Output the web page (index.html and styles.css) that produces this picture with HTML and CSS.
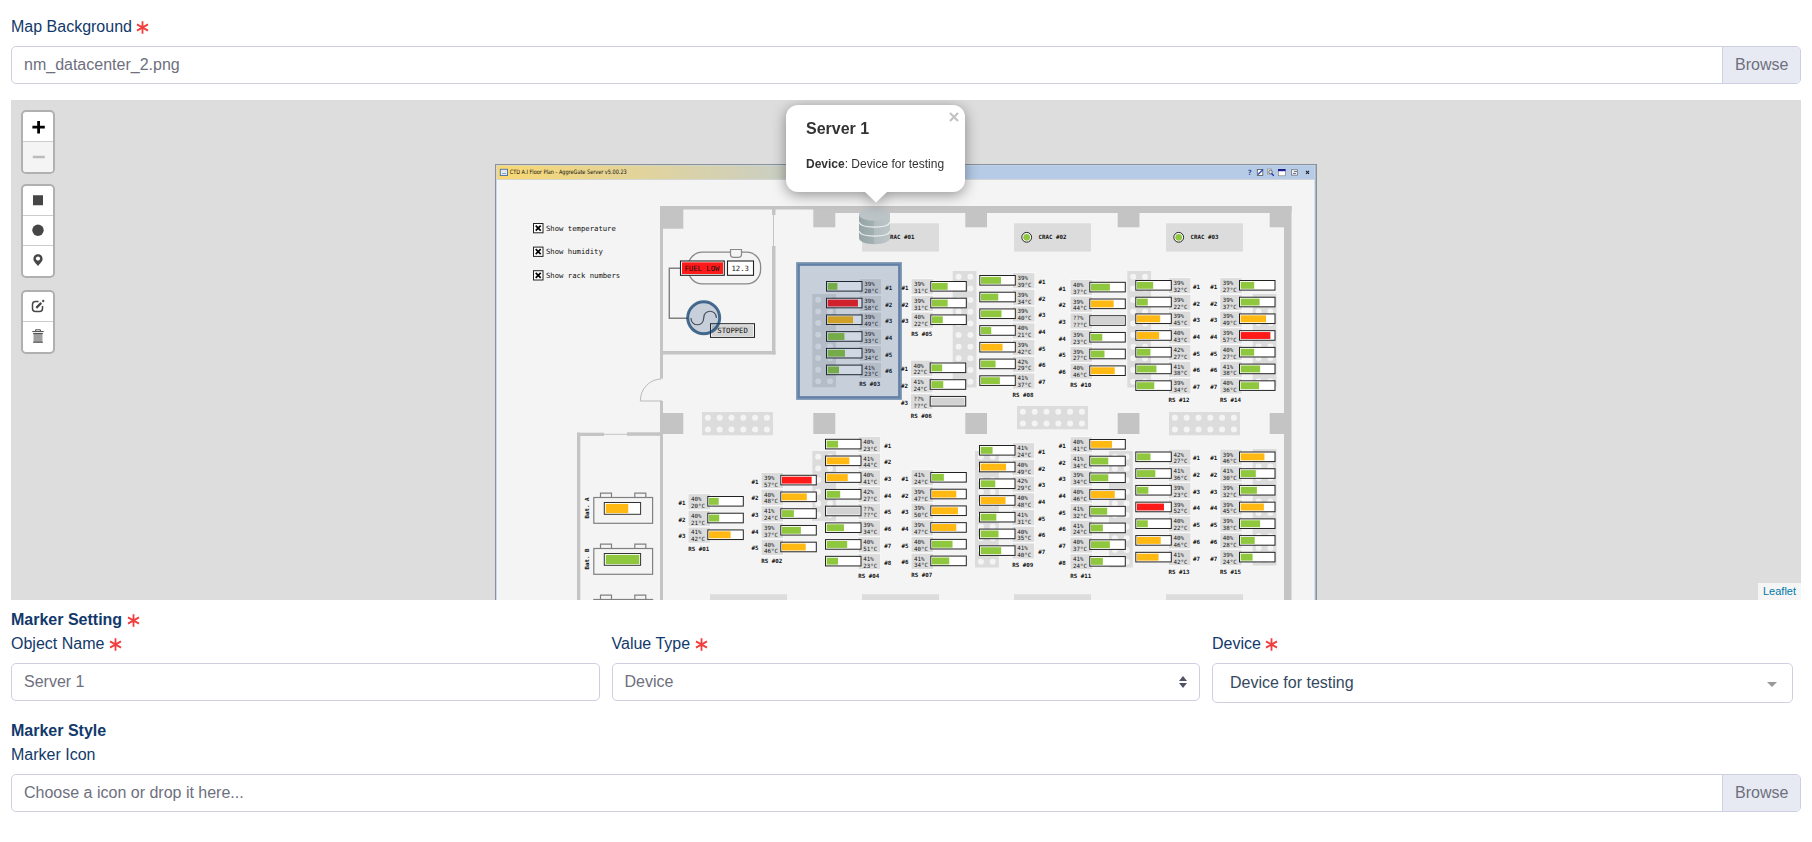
FILE: index.html
```html
<!DOCTYPE html>
<html lang="en">
<head>
<meta charset="utf-8">
<title>Map settings</title>
<link rel="stylesheet" href="styles.css">
</head>
<body>
<svg width="0" height="0" class="defs">
  <symbol id="star" viewBox="0 0 13 13"><path d="M6.5 .3v12.4M1 3.4l11 6.2M12 3.4L1 9.6" stroke="#f23d3d" stroke-width="1.8" fill="none"/></symbol>
</svg>
<form class="form">
  <label class="label">Map Background <svg class="req"><use href="#star"/></svg></label>
  <div class="file"><span class="file-name">nm_datacenter_2.png</span><span class="file-btn">Browse</span></div>

  <div class="map">
    <svg class="plan" id="plan" width="822" height="500" viewBox="495 100 822 500"></svg>
    <div class="controls">
      <div class="bar">
        <span class="tool"><svg width="30" height="29" viewBox="0 0 30 29"><path d="M9.4 15.2h12.400M15.6 9v12.400" stroke="#000" stroke-width="2.800"/></svg></span>
        <span class="tool off"><svg width="30" height="30" viewBox="0 0 30 30"><path d="M9.8 15h12" stroke="#bbb" stroke-width="2.6"/></svg></span>
      </div>
      <div class="bar shapes">
        <span class="tool"><svg width="30" height="29" viewBox="0 0 30 29"><path d="M10 9.3h10v10H10z" fill="#464646"/></svg></span>
        <span class="tool"><svg width="30" height="29" viewBox="0 0 30 29"><circle cx="15" cy="14.300" r="5.7" fill="#464646"/></svg></span>
        <span class="tool"><svg width="30" height="30" viewBox="0 0 30 30"><path d="M15 8.3c-2.8 0-4.6 2-4.6 4.5 0 3 2.4 4.2 4.6 7.2 2.2-3 4.6-4.2 4.6-7.2 0-2.500-1.800-4.500-4.600-4.500z" fill="#464646"/><circle cx="15" cy="12.600" r="2.100" fill="#fff"/></svg></span>
      </div>
      <div class="bar">
        <span class="tool"><svg width="30" height="29" viewBox="0 0 30 29" fill="none" stroke="#464646"><path d="M15.600 9.500h-3.100q-3 0-3 3v4q0 3 3 3h4q3 0 3-3v-2.500" stroke-width="1.500"/><path d="M13.300 15.900l5-5" stroke-width="2.200"/><path d="M19.400 9.700l1.500-1.500" stroke-width="2"/></svg></span>
        <span class="tool"><svg width="30" height="30" viewBox="0 0 30 30"><path d="M10.500 11.500h9v9h-9z" fill="#a0a0a0"/><path d="M9.300 9.600h11.400M12.600 9V7.800h4.800V9M10.200 11.600h9.600M10.200 20.200h9.600" stroke="#464646" fill="none"/></svg></span>
      </div>
    </div>
    <div class="popup">
      <div class="popup-body">
        <svg class="close" width="10" height="10" viewBox="0 0 10 10"><path d="M1 1l8 8M9 1L1 9" stroke="#c3c3c3" stroke-width="2.200"/></svg>
        <h3>Server 1</h3>
        <p><b>Device</b>: Device for testing</p>
      </div>
      <svg class="tip" width="22" height="11" viewBox="0 0 22 11"><path d="M0 0h22L11 10.600z" fill="#fff"/></svg>
    </div>
    <a class="credit">Leaflet</a>
  </div>

  <div class="heading first">Marker Setting <svg class="req"><use href="#star"/></svg></div>
  <div class="row">
    <div class="col"><label class="label">Object Name <svg class="req"><use href="#star"/></svg></label><div class="input">Server 1</div></div>
    <div class="col"><label class="label">Value Type <svg class="req"><use href="#star"/></svg></label><div class="input select">Device<svg width="8" height="12" viewBox="0 0 8 12"><path d="M0 5l4-5 4 5zM0 7l4 5 4-5z" fill="#505366"/></svg></div></div>
    <div class="col last"><label class="label">Device <svg class="req"><use href="#star"/></svg></label><div class="input picker">Device for testing<svg width="10" height="5" viewBox="0 0 10 5"><path d="M0 0h10L5 5z" fill="#999"/></svg></div></div>
  </div>
  <div class="heading second">Marker Style</div>
  <label class="label">Marker Icon</label>
  <div class="file"><span class="file-name">Choose a icon or drop it here...</span><span class="file-btn">Browse</span></div>
</form>
<script src="plan.js"></script>
</body>
</html>
```
FILE: styles.css
```css
* { box-sizing: border-box; }
body { margin: 0; background: #fff; font: 16px/24px "Liberation Sans", Arial, sans-serif; color: #12396b; }
.defs { display: block; height: 0; }
.form { padding: 15px 11px 0; }
.label { display: block; height: 24px; margin-bottom: 7px; }
.req { width: 13px; height: 13px; vertical-align: -2px; margin-left: 0; }
.file, .input { height: 38px; border: 1px solid #cfcfe2; border-radius: 5px; color: #6e707e; line-height: 36px; }
.file { display: flex; overflow: hidden; }
.file-name { flex: 1; padding-left: 12px; }
.file-btn { width: 78px; border-left: 1px solid #cfcfe2; background: #e8eaf3; padding-left: 12px; }
.map { position: relative; display: flex; justify-content: center; height: 500px; margin-top: 16px; background: #ddd; overflow: hidden; }
.plan { display: block; }
.controls { position: absolute; left: 10px; top: 10px; display: flex; flex-direction: column; gap: 10px; }
.bar { width: 34px; border: 2px solid #b0b0b0; border-radius: 5px; background: #fff; overflow: hidden; }
.bar.shapes { margin-bottom: 2px; }
.tool { display: block; border-bottom: 1px solid #ccc; }
.tool:last-child { border-bottom: 0; }
.tool svg { display: block; }
.tool.off { background: #f4f4f4; }
.popup { position: absolute; left: 775px; top: 5px; width: 179px; filter: drop-shadow(0 3px 7px rgba(0, 0, 0, .4)); }
.popup-body { height: 87px; border-radius: 12px; background: #fff; padding: 12px 20px; color: #333; }
.popup h3 { margin: 0; font-size: 16px; line-height: 24px; }
.popup p { margin: 15px 0 0; font-size: 12px; line-height: 17px; white-space: nowrap; }
.close { position: absolute; right: 6px; top: 7px; }
.tip { display: block; margin: -.5px auto 0; }
.credit { position: absolute; right: 0; bottom: 0; height: 17px; padding: 0 5px; background: #f5f5f5; color: #0078a8; font-size: 11px; line-height: 17px; }
.heading { height: 24px; font-weight: bold; }
.heading.first { margin-top: 8px; }
.heading.second { margin-top: 16px; }
.row { display: flex; gap: 12px; }
.col { width: 588.5px; }
.col.last { width: 581px; }
.input { padding: 0 12px; }
.select, .picker { display: flex; align-items: center; justify-content: space-between; }
.picker { height: 40px; padding: 0 15px 0 17px; color: #35495e; }
.picker svg { margin-top: 2px; }
.plan text { font-family: "DejaVu Sans Mono", monospace; fill: #111; }
.plan .tiny { font-size: 5.8px; }
.plan .tag { font-size: 5.800px; font-weight: bold; }
.plan .note { font-size: 7.250px; }
.plan .title { font-family: "DejaVu Sans", sans-serif; font-size: 6px; }
```
FILE: plan.js
```js
const out = [];
const WALL = '#c4c4c4', PANEL = '#dcdcdc';
const box = (x, y, w, h, fill, extra = '') => out.push(`<rect x="${x}" y="${y}" width="${w}" height="${h}" fill="${fill}" ${extra}/>`);
const line = (d, stroke, w = 1) => out.push(`<path d="${d}" fill="none" stroke="${stroke}" stroke-width="${w}"/>`);
const text = (x, y, s, cls, extra = '') => out.push(`<text x="${x}" y="${y}" class="${cls}" ${extra}>${s}</text>`);

// Window frame and title bar
out.push('<defs><linearGradient id="tb" gradientUnits="userSpaceOnUse" x1="495" y1="0" x2="905" y2="0"><stop offset="0" stop-color="#fad872"/><stop offset="1" stop-color="#b5cbe6"/></linearGradient><linearGradient id="db"><stop offset="0" stop-color="#95a5a6"/><stop offset=".5" stop-color="#a3b1b3"/><stop offset=".5" stop-color="#b3bdc0"/><stop offset="1" stop-color="#bcc5c8"/></linearGradient></defs>');
box(495, 164, 822, 450, '#8c9098');
box(496, 165, 819.5, 450, '#c5daf0');
box(497, 165.5, 817.3, 14, 'url(#tb)');
box(497, 179.5, 817.3, 430, '#f4f4f4');
line('M497 179.500H1314', '#d0d0cc', .7);
box(500.3, 169.300, 7.200, 6.200, '#dfe9f7', 'stroke="#5578a8"');
line('M502 173.500h4', '#7890b0', .8);
text(509.7, 174.300, 'CTD A.I Floor Plan - AggreGate Server v5.00.23', 'title', 'textLength="117" lengthAdjust="spacingAndGlyphs"');
text(1247.500, 175, '?', 'note', 'style="font-weight:bold;fill:#223a8c"');
box(1257.300, 169.500, 5.500, 6, '#fff', 'stroke="#555" stroke-width=".8"');
line('M1258 174.500l5-5', '#2b4cae', 1.500);
box(1267.500, 169, 4, 5, '#e8e8dd', 'stroke="#888" stroke-width=".6"');
out.push('<circle cx="1270.500" cy="172" r="1.800" fill="#dde" stroke="#456" stroke-width=".7"/>');
line('M1271.500 173.500l2.300 2.300', '#2233aa', 1.300);
box(1278.300, 169.500, 7, 6.300, '#fff', 'stroke="#777" stroke-width=".6"');
box(1278, 169, 7.500, 2.200, '#1a1f8c');
box(1291.500, 169.700, 6, 5.500, '#eee', 'stroke="#778" stroke-width=".8"');
line('M1293 173.500h3M1294 171.500h3', '#667', .9);
line('M1306 170.800l3 3M1309 170.800l-3 3', '#222', 1.100);

// Walls
box(660, 206, 631.5, 3.500, WALL);
box(835, 206, 456.500, 7, WALL);
box(660, 206, 3, 172.700, WALL);
box(660, 401, 3, 200, WALL);
box(1284, 206, 7.500, 400, WALL);
box(772, 206, 3.500, 9, WALL);
box(772, 246, 3.500, 108.500, WALL);
line('M773.500 215V246', WALL);
box(660, 351, 115.500, 3.500, WALL);
box(577, 432.700, 27, 3.300, WALL);
box(627, 432.300, 33, 3.500, WALL);
line('M604 434.300h23', WALL);
box(577, 432.700, 3.300, 170, WALL);
line('M661 379a21 22 0 0 0-20.700 22H662', '#bbb');
[[663, 20.300], [813.300, 22], [965.300, 21.700], [1117.700, 21.700], [1269.700, 15]].forEach(([x, w], i) => {
  box(x, 206, w, i ? 21.300 : 22.700, WALL);
  box(x, 413, w, 21, WALL);
});

// Perforated floor panels
function holes(x, y, cols, rows) {
  const w = cols * 11.800 + .2, h = rows * 11.650;
  box(x, y, w, h, PANEL);
  for (let c = 0; c < cols; c++) for (let r = 0; r < rows; r++)
    out.push(`<circle cx="${x + 5.900 + c * 11.800}" cy="${y + 5.800 + r * 11.650}" r="3" fill="#f4f4f4"/>`);
}
[[702, 412, 6, 2], [1017, 406, 6, 2], [1169, 412, 6, 2], [812.300, 294, 2, 8], [952.700, 271, 2, 10], [1127.300, 271, 2, 10],
 [1252.700, 294, 2, 8], [812.300, 451, 2, 6], [975, 451, 2, 10], [1109, 451, 2, 10], [1252.700, 449, 2, 10]].forEach(a => holes(...a));

// Air conditioners
[862, 1014, 1166].forEach((x, i) => {
  box(x, 223.300, 77, 28.300, PANEL);
  out.push(`<circle cx="${x + 12.700}" cy="237.300" r="4.900" fill="#fff" stroke="#222" stroke-width="1"/><circle cx="${x + 12.700}" cy="237.300" r="3.400" fill="#8fc73e"/>`);
  text(x + 24.500, 239.200, 'CRAC #0' + (i + 1), 'tag');
});
[710, 862, 1014, 1166].forEach(x => box(x, 594.300, 77, 10, PANEL));

// Display options
[['Show temperature', 228], ['Show humidity', 251.600], ['Show rack numbers', 275.200]].forEach(([s, y]) => {
  box(533.500, y - 4.500, 9.500, 9.300, '#fff', 'stroke="#222" stroke-width="1"');
  line(`M535.700 ${y - 2.400}l5 5M540.700 ${y - 2.400}l-5 5`, '#000', 1.700);
  text(546, y + 2.500, s, 'note');
});

// Fuel tank and generator
box(688.300, 252.200, 72.300, 31.600, 'none', 'rx="14" stroke="#888" stroke-width="1.300"');
box(731, 250, 10, 5, '#f4f4f4');
line('M730.500 249.500h11v5q0 2.800-3 2.800h-5q-3 0-3-2.800z', '#888', 1.200);
line('M680 268.200H669.300V318.300H688', '#808080', 1.400);
box(680.500, 261, 43.800, 14.300, '#fff', 'stroke="#222" stroke-width="1.100"');
box(682, 262.300, 41, 11.700, '#ff1a1a');
text(684.500, 271, 'FUEL LOW', 'note');
box(727.500, 261, 26, 14.300, '#fff', 'stroke="#222" stroke-width="1.100"');
text(731.500, 271, '12.3', 'note');
box(710.500, 323.700, 44, 13.700, '#f4f4f4', 'stroke="#222" stroke-width="1"');
box(712, 325.300, 41, 10.700, '#d3d3d3');
text(717.300, 333.200, 'STOPPED', 'note');
line('M691 318c0 9 12.700 9 12.700 0s12.700-9 12.700 0', '#555', 1.200);

// Battery banks
[['A', .67, '#ffb912'], ['B', 1, '#8fc73e'], ['C', 1, '#8fc73e']].forEach(([n, f, c], i) => {
  const y = 497.500 + i * 51;
  line(`M600.500 ${y}v-4.300h11v4.300M634.800 ${y}v-4.300h11v4.300`, '#808080', 1.200);
  box(593.800, y, 58.800, 25.800, '#f4f4f4', 'stroke="#808080" stroke-width="1.200"');
  box(604.300, y + 5, 36.300, 11.800, '#fff', 'stroke="#333" stroke-width="1"');
  box(605.800, y + 6.400, 33.500 * f, 9.200, c);
  if (i < 2) text(0, 0, 'Bat. ' + n, 'tag', `transform="translate(589 ${y + 21}) rotate(-90)"`);
});

// Rack stacks: id, side of the bar, bar x, first bar y, [humidity, temperature, fill override], tag offset
const racks = [
  ['01', 'R', 707.300, 496.500, [[40, 20], [40, 21], [41, 42]]],
  ['02', 'R', 780.300, 475.300, [[39, 57], [40, 48], [41, 24], [39, 37], [40, 46]]],
  ['03', 'L', 826, 281.500, [[39, 20], [39, 58], [39, 49], [39, 33], [39, 34], [41, 23]]],
  ['04', 'L', 825, 439.300, [[40, 23], [41, 44], [40, 41], [42, 27], 0, [39, 34], [40, 51, 40], [41, 23]]],
  ['05', 'R', 930.300, 281.500, [[39, 31], [39, 31], [40, 22]]],
  ['06', 'R', 929.700, 363, [[40, 22], [41, 24], 0]],
  ['07', 'R', 930.300, 472.500, [[41, 24], [39, 47], [39, 50], [39, 47], [40, 40], [41, 34]]],
  ['08', 'L', 979.300, 275.500, [[39, 39], [39, 34], [39, 40], [40, 21], [39, 42], [42, 29], [41, 37]]],
  ['09', 'L', 979, 445.500, [[41, 24], [40, 49], [42, 29], [40, 48], [41, 31], [40, 35], [41, 40]]],
  ['10', 'R', 1089.300, 282.300, [[40, 37], [39, 44], 0, [39, 23], [39, 27], [40, 46]], -30.600],
  ['11', 'R', 1089.300, 439.500, [[40, 41], [41, 34], [39, 34], [40, 46], [41, 32], [41, 24], [40, 37], [41, 24]], -30.600],
  ['12', 'L', 1135.300, 280.500, [[39, 32], [39, 22], [39, 45], [40, 43], [42, 27], [41, 38], [39, 34]], 57.600],
  ['13', 'L', 1135.300, 452, [[42, 27], [41, 36], [39, 23], [39, 52], [40, 22], [40, 46], [41, 42]], 57.600],
  ['14', 'R', 1239, 280.500, [[39, 27], [39, 37], [39, 49], [39, 57], [40, 27], [41, 38], [40, 36]]],
  ['15', 'R', 1239, 452, [[39, 46], [41, 30], [39, 32], [39, 45], [39, 38], [40, 28], [39, 24]]],
];
racks.forEach(([id, side, x, y0, rows, off]) => {
  const left = side === 'L';
  const cx = left ? x + 33.500 : x - 18.800;
  const tx = left ? x + 38.300 : x - 16.300;
  rows.forEach((r, i) => {
    const y = y0 + i * 16.720;
    box(cx - .7, y - 3.200, 23, 16.700, '#fbfbfb');
    box(cx, y - 2.400, 21.600, 15.200, PANEL);
    text(tx, y + 4.500, r ? r[0] + '%' : '??%', 'tiny');
    text(tx, y + 11.300, r ? r[1] + '°C' : '??°C', 'tiny');
    box(x + .5, y, 35.500, 9.600, '#fff', 'stroke="#222" stroke-width="1"');
    if (r) {
      const t = r[2] || r[1];
      box(x + 1.700, y + 1.400, t * .54 - 1.100, 6.900, t > 51 ? '#ff1a1a' : t > 40 ? '#ffb912' : '#8fc73e');
    } else box(x + 1.700, y + 1.200, 33.200, 7.200, '#d2d2d2');
    text(x + (off || (left ? 59.200 : -28.800)), y + 8.300, '#' + (i + 1), 'tag');
  });
  text(left ? x + 33.300 : x - 19, y0 + rows.length * 16.720 + 4.500, 'RS #' + id, 'tag');
});

// Map objects drawn over the plan
box(798, 264, 102, 134, '#143a77', 'fill-opacity=".2"');
box(798, 264, 102, 134, 'none', 'stroke="#0f3f78" stroke-opacity=".55" stroke-width="3.700"');
out.push('<circle cx="703.700" cy="317.800" r="16" fill="#143a77" fill-opacity=".2" stroke="#0f3f6e" stroke-opacity=".75" stroke-width="3"/>');
out.push('<path d="M859 214.500v23.500c0 3.700 7 6.200 15.500 6.200s15.500-2.500 15.500-6.200v-23.500z" fill="url(#db)"/>');
line('M859 222.200q1.500 5 15.500 5t15.500-5M859 231.200q1.500 5 15.500 5t15.500-5', '#edf0f0', 1.200);
out.push('<ellipse cx="874.500" cy="214.500" rx="15.500" ry="6.300" fill="#bcc4c8"/>');

document.getElementById('plan').innerHTML = out.join('');
```
